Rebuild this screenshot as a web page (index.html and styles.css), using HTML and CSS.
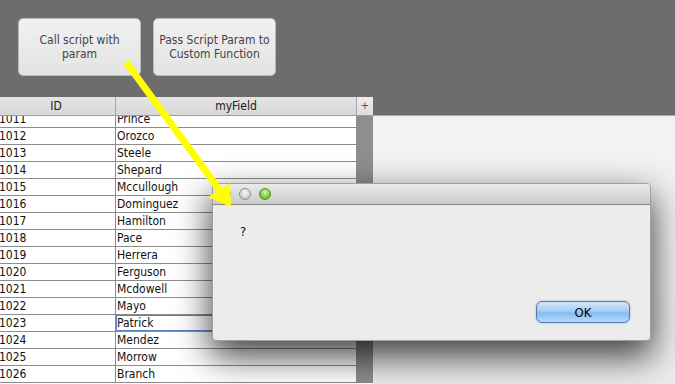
FILE: index.html
```html
<!DOCTYPE html>
<html>
<head>
<meta charset="utf-8">
<link rel="stylesheet" href="styles.css">
</head>
<body>
<div class="app">
  <div class="toolbar">
    <button class="btn">Call script with<br>param</button>
    <button class="btn">Pass Script Param to<br>Custom Function</button>
  </div>
  <div class="main">
    <div class="table">
      <div class="thead">
        <div class="h-id">ID</div>
        <div class="h-f">myField</div>
        <div class="h-s">+</div>
      </div>
      <div class="tbody">
        <div class="rows">
          <div class="row"><div class="c-id">1011</div><div class="c-f">Prince</div><div class="c-s"></div></div>
          <div class="row"><div class="c-id">1012</div><div class="c-f">Orozco</div><div class="c-s"></div></div>
          <div class="row"><div class="c-id">1013</div><div class="c-f">Steele</div><div class="c-s"></div></div>
          <div class="row"><div class="c-id">1014</div><div class="c-f">Shepard</div><div class="c-s"></div></div>
          <div class="row"><div class="c-id">1015</div><div class="c-f">Mccullough</div><div class="c-s"></div></div>
          <div class="row"><div class="c-id">1016</div><div class="c-f">Dominguez</div><div class="c-s"></div></div>
          <div class="row"><div class="c-id">1017</div><div class="c-f">Hamilton</div><div class="c-s"></div></div>
          <div class="row"><div class="c-id">1018</div><div class="c-f">Pace</div><div class="c-s"></div></div>
          <div class="row"><div class="c-id">1019</div><div class="c-f">Herrera</div><div class="c-s"></div></div>
          <div class="row"><div class="c-id">1020</div><div class="c-f">Ferguson</div><div class="c-s"></div></div>
          <div class="row"><div class="c-id">1021</div><div class="c-f">Mcdowell</div><div class="c-s"></div></div>
          <div class="row"><div class="c-id">1022</div><div class="c-f">Mayo</div><div class="c-s"></div></div>
          <div class="row"><div class="c-id">1023</div><div class="c-f selected">Patrick</div><div class="c-s"></div></div>
          <div class="row"><div class="c-id">1024</div><div class="c-f">Mendez</div><div class="c-s"></div></div>
          <div class="row"><div class="c-id">1025</div><div class="c-f">Morrow</div><div class="c-s"></div></div>
          <div class="row"><div class="c-id">1026</div><div class="c-f">Branch</div><div class="c-s"></div></div>
        </div>
      </div>
    </div>
    <div class="canvas">
      <div class="canvas-head"></div>
      <div class="canvas-body"></div>
    </div>
  </div>

  <div class="dialog">
    <div class="titlebar">
      <span class="light gray"></span>
      <span class="light gray"></span>
      <span class="light green"></span>
    </div>
    <div class="dbody">
      <div class="msg">?</div>
      <div class="footer"><button class="ok">OK</button></div>
    </div>
  </div>

  <svg class="arrow" width="675" height="384" viewBox="0 0 675 384">
    <line x1="126" y1="62" x2="221" y2="192" stroke="#ffff00" stroke-width="7"/>
    <polygon points="231,207 208,197 230,183" fill="#ffff00"/>
  </svg>
</div>
</body>
</html>
```

FILE: styles.css
```css
* { box-sizing: border-box; }
html, body { margin: 0; padding: 0; }
body {
  font-family: "DejaVu Sans Condensed", "DejaVu Sans", sans-serif;
  font-stretch: condensed;
  font-size: 12px;
}
.app {
  position: relative;
  width: 675px;
  height: 384px;
  overflow: hidden;
  background: #6d6d6d;
}
.toolbar {
  height: 97px;
  display: flex;
  align-items: flex-start;
  gap: 12px;
  padding: 18px 0 0 18px;
  background: #6d6d6d;
}
.btn {
  width: 123px;
  height: 58px;
  border: 1px solid #b9b9b9;
  border-radius: 5px;
  background: linear-gradient(#f1f1f1, #e3e3e3);
  color: #444;
  font: inherit;
  font-size: 12px;
  line-height: 14px;
  padding: 0;
}
.main {
  display: flex;
  height: 287px;
}
.table {
  width: 376px;
  margin-left: -3px;
  display: flex;
  flex-direction: column;
  background: #fff;
}
.thead {
  height: 19px;
  display: grid;
  grid-template-columns: 119px 241px 16px;
  background: linear-gradient(#e4e4e4, #d8d8d8);
  border-bottom: 1px solid #9c9c9c;
  color: #1a1a1a;
  line-height: 18px;
  text-align: center;
}
.h-id, .h-f { border-right: 1px solid #a6a6a6; }
.h-s {
  background: linear-gradient(#ececec, #dedede);
  color: #555;
  font-size: 11px;
}
.tbody {
  flex: 1;
  overflow: hidden;
  background: #fff;
}
.rows { margin-top: -5px; }
.row {
  display: grid;
  grid-template-columns: 119px 241px 16px;
  height: 17px;
  border-bottom: 1px solid #8c8c8c;
  line-height: 16px;
  color: #111;
}
.c-id { border-right: 1px solid #8c8c8c; padding-left: 2px; }
.c-f { border-right: 1px solid #8c8c8c; padding-left: 1px; }
.c-s { background: #8e8e8e; }
.selected { box-shadow: inset 0 0 0 1px #5a80cc; }
.canvas {
  flex: 1;
  display: flex;
  flex-direction: column;
}
.canvas-head {
  height: 19px;
  background: #6d6d6d;
  border-bottom: 1px solid #aaa;
}
.canvas-body {
  flex: 1;
  background: linear-gradient(#f3f3f3, #ececec);
}
.dialog {
  position: absolute;
  left: 212px;
  top: 183px;
  width: 439px;
  height: 158px;
  border-radius: 4px;
  background: #ececec;
  border: 1px solid #a0a0a0;
  box-shadow: 0 14px 34px 2px rgba(0, 0, 0, 0.72);
  display: flex;
  flex-direction: column;
  overflow: hidden;
}
.titlebar {
  height: 21px;
  flex: none;
  display: flex;
  align-items: center;
  gap: 8px;
  padding-left: 6px;
  background: linear-gradient(#ebebeb, #cbcbcb);
  border-bottom: 1px solid #8a8a8a;
}
.light {
  width: 12px;
  height: 12px;
  border-radius: 50%;
}
.gray {
  background: radial-gradient(circle at 50% 35%, #fafafa 0, #d6d6d6 55%, #b4b4b4 100%);
  border: 1px solid #8e8e8e;
}
.green {
  background: radial-gradient(circle at 50% 35%, #d8f5b0 0, #8ccf4e 50%, #56a321 100%);
  border: 1px solid #4f8a2a;
}
.dbody {
  flex: 1;
  display: flex;
  flex-direction: column;
  padding: 19px 20px 17px 27px;
}
.msg {
  font-size: 13px;
  color: #111;
  flex: 1;
}
.footer {
  display: flex;
  justify-content: flex-end;
}
.ok {
  width: 94px;
  height: 22px;
  border: 1px solid #4f7ab5;
  border-radius: 6px;
  background: linear-gradient(#d3e6fa 0%, #a7cdf4 45%, #86bbf0 55%, #b9daf8 100%);
  box-shadow: 0 0 2px rgba(70, 120, 200, 0.6);
  font: inherit;
  font-size: 13px;
  color: #000;
  padding: 0;
}
.arrow {
  position: absolute;
  left: 0;
  top: 0;
  pointer-events: none;
}
```
